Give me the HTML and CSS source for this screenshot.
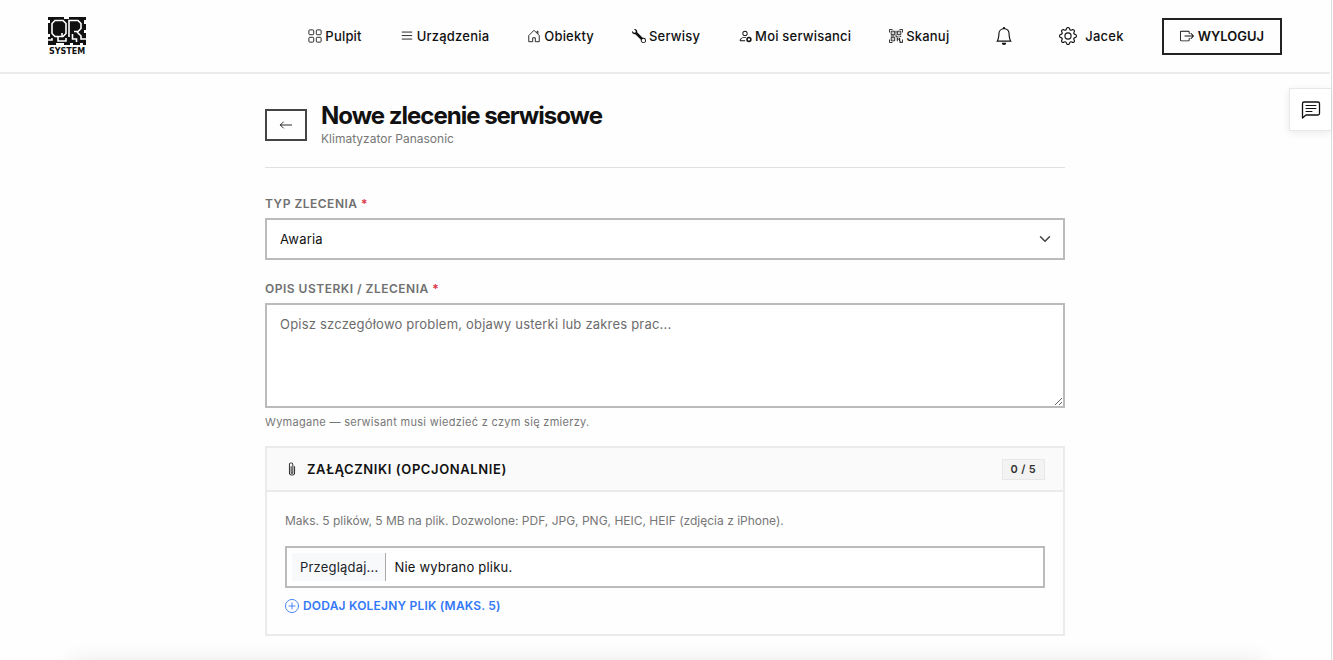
FILE: index.html
```html
<!DOCTYPE html>
<html lang="pl">
<head>
    <meta charset="UTF-8">
    <meta name="viewport" content="width=device-width, initial-scale=1.0">
    <title>Nowe zlecenie serwisowe</title>
    <link rel="stylesheet" href="styles.css">
</head>
<body>
    <div class="page">
        <header class="header">
            <a class="logo" href="#" aria-label="QR System">
                <svg class="logo-mark" viewBox="0 0 38 28" aria-hidden="true">
                    <rect width="38" height="28" fill="#111"/>
                    <g fill="none" stroke="#fff" stroke-width="1.600">
                        <path d="M7 3.500h8l3 3v10l-3 3H7l-3-3v-10z"/>
                        <path d="M21 20V3.500h9l3 3v5l-3 3h-4M29 15l4 4v3h5"/>
                        <path d="M24.500 17v5h4v3"/>
                        <path d="M0 23h4v-2M10 20v4h8v-3M14 16v4"/>
                    </g>
                    <path fill="#fff" d="M0 3h2v3H0zM16 0h5v2h-5zM36 3h2v4h-2zM0 17h2v3H0zM8 26h8v2H8zM22 26h3v2h-3zM32 26h3v2h-3zM36 13h2v3h-2z"/>
                </svg>
                <span class="logo-text">SYSTEM</span>
            </a>

            <nav class="nav">
                <a class="nav-link" href="#">
                    <svg class="icon" viewBox="0 0 16 16" fill="none" stroke="currentColor"><rect x="1" y="1" width="5.500" height="5.500" rx="1"/><rect x="9.500" y="1" width="5.500" height="5.500" rx="1"/><rect x="1" y="9.500" width="5.500" height="5.500" rx="1"/><rect x="9.500" y="9.500" width="5.500" height="5.500" rx="1"/></svg>
                    Pulpit
                </a>
                <a class="nav-link" href="#">
                    <svg class="icon" viewBox="0 0 16 16" fill="none" stroke="currentColor" stroke-linecap="round"><path d="M2.500 3.500h11M2.500 7.500h11M2.500 11.500h11"/></svg>
                    Urządzenia
                </a>
                <a class="nav-link" href="#">
                    <svg class="icon" viewBox="0 0 16 16" fill="none" stroke="currentColor" stroke-linejoin="round"><path d="M2 14.500v-7l6-6 6 6v7H9.500V10h-3v4.500z"/><path d="M11.500 4.500v-2h1v3"/></svg>
                    Obiekty
                </a>
                <a class="nav-link" href="#">
                    <svg class="icon" viewBox="0 0 16 16" fill="currentColor"><path fill-rule="evenodd" d="M.102 2.223A3.004 3.004 0 0 0 3.780 5.897l6.341 6.252A3.003 3.003 0 0 0 13 16a3 3 0 1 0-.851-5.878L5.897 3.781A3.004 3.004 0 0 0 2.223.1l2.141 2.142L4 4l-1.757.364zM13 11a2 2 0 1 1 0 4 2 2 0 0 1 0-4z"/></svg>
                    Serwisy
                </a>
                <a class="nav-link" href="#">
                    <svg class="icon" viewBox="0 0 16 16" fill="currentColor"><path d="M11 5a3 3 0 1 1-6 0 3 3 0 0 1 6 0M8 7a2 2 0 1 0 0-4 2 2 0 0 0 0 4m.256 7a4.500 4.500 0 0 1-.229-1.004H3c.001-.246.154-.986.832-1.664C4.484 10.680 5.711 10 8 10q.39 0 .74.025c.226-.341.496-.65.804-.918Q8.844 9.002 8 9c-5 0-6 3-6 4s1 1 1 1z"/><circle cx="12.500" cy="12" r="2.200" fill="none" stroke="currentColor" stroke-width="1.800"/></svg>
                    Moi serwisanci
                </a>
                <a class="nav-link" href="#">
                    <svg class="icon" viewBox="0 0 16 16" fill="none" stroke="currentColor"><path d="M.5 4V.5H4M12 .5h3.500V4M15.500 12v3.500H12M4 15.500H.5V12"/><path d="M2.500 2.500h4v4h-4zM9.500 2.500h4v4h-4zM2.500 9.500h4v4h-4zM8 2v3M8 6v3h3M2 8h4M12 8.500h2M9.500 10v4M9 11.500h4M12 10v4h2"/><path d="M4 4.500h1M11 4.500h1M4 11.500h1"/></svg>
                    Skanuj
                </a>
                <button class="bell" type="button" aria-label="Powiadomienia">
                    <svg class="icon-lg" viewBox="0 0 16 16" fill="currentColor"><path d="M8 16a2 2 0 0 0 2-2H6a2 2 0 0 0 2 2M8 1.918l-.797.161A4 4 0 0 0 4 6c0 .628-.134 2.197-.459 3.742-.16.767-.376 1.566-.663 2.258h10.244c-.287-.692-.502-1.490-.663-2.258C12.134 8.197 12 6.628 12 6a4 4 0 0 0-3.203-3.920zM14.220 12c.223.447.481.801.780 1H1c.299-.199.557-.553.780-1C2.680 10.200 3 6.880 3 6c0-2.420 1.720-4.440 4.005-4.901a1 1 0 1 1 1.990 0A5 5 0 0 1 13 6c0 .880.320 4.200 1.220 6"/></svg>
                </button>
                <a class="nav-link user" href="#">
                    <svg class="icon-lg" viewBox="0 0 16 16" fill="currentColor"><path d="M8 4.754a3.246 3.246 0 1 0 0 6.492 3.246 3.246 0 0 0 0-6.492M5.754 8a2.246 2.246 0 1 1 4.492 0 2.246 2.246 0 0 1-4.492 0"/><path d="M9.796 1.343c-.527-1.790-3.065-1.790-3.592 0l-.094.319a.873.873 0 0 1-1.255.520l-.292-.160c-1.640-.892-3.433.902-2.540 2.541l.159.292a.873.873 0 0 1-.520 1.255l-.319.094c-1.790.527-1.790 3.065 0 3.592l.319.094a.873.873 0 0 1 .520 1.255l-.160.292c-.892 1.640.901 3.434 2.541 2.540l.292-.159a.873.873 0 0 1 1.255.520l.094.319c.527 1.790 3.065 1.790 3.592 0l.094-.319a.873.873 0 0 1 1.255-.520l.292.160c1.640.893 3.434-.902 2.540-2.541l-.159-.292a.873.873 0 0 1 .520-1.255l.319-.094c1.790-.527 1.790-3.065 0-3.592l-.319-.094a.873.873 0 0 1-.520-1.255l.160-.292c.893-1.640-.902-3.433-2.541-2.540l-.292.159a.873.873 0 0 1-1.255-.520zm-2.633.283c.246-.835 1.428-.835 1.674 0l.094.319a1.873 1.873 0 0 0 2.693 1.115l.291-.160c.764-.415 1.600.420 1.184 1.185l-.159.292a1.873 1.873 0 0 0 1.116 2.692l.318.094c.835.246.835 1.428 0 1.674l-.319.094a1.873 1.873 0 0 0-1.115 2.693l.160.291c.415.764-.420 1.600-1.185 1.184l-.291-.159a1.873 1.873 0 0 0-2.693 1.116l-.094.318c-.246.835-1.428.835-1.674 0l-.094-.319a1.873 1.873 0 0 0-2.692-1.115l-.292.160c-.764.415-1.600-.420-1.184-1.185l.159-.291A1.873 1.873 0 0 0 1.945 8.930l-.319-.094c-.835-.246-.835-1.428 0-1.674l.319-.094A1.873 1.873 0 0 0 3.060 4.377l-.160-.292c-.415-.764.420-1.600 1.185-1.184l.292.159a1.873 1.873 0 0 0 2.692-1.115z"/></svg>
                    Jacek
                </a>
                <button class="logout" type="button">
                    <svg class="icon" viewBox="0 0 16 16" fill="currentColor"><path d="M10 12.500a.5.5 0 0 1-.5.5h-8a.5.5 0 0 1-.5-.5v-9a.5.5 0 0 1 .5-.5h8a.5.5 0 0 1 .5.5v2a.5.5 0 0 0 1 0v-2A1.500 1.500 0 0 0 9.500 2h-8A1.500 1.500 0 0 0 0 3.500v9A1.500 1.500 0 0 0 1.500 14h8a1.500 1.500 0 0 0 1.500-1.500v-2a.5.5 0 0 0-1 0z"/><path d="M15.854 8.354a.5.5 0 0 0 0-.708l-3-3a.5.5 0 0 0-.708.708L14.293 7.500H5.500a.5.5 0 0 0 0 1h8.793l-2.147 2.146a.5.5 0 0 0 .708.708z"/></svg>
                    WYLOGUJ
                </button>
            </nav>
        </header>

        <main class="container">
            <div class="page-head">
                <a class="back" href="#" aria-label="Wstecz">
                    <svg class="icon" viewBox="0 0 16 16" fill="none" stroke="currentColor" stroke-linecap="round" stroke-linejoin="round"><path d="M14.500 8h-13M5 4.500L1.500 8 5 11.500"/></svg>
                </a>
                <div>
                    <h1>Nowe zlecenie serwisowe</h1>
                    <p class="subtitle">Klimatyzator Panasonic</p>
                </div>
            </div>

            <form>
                <label class="label" for="type">Typ zlecenia <span class="required">*</span></label>
                <div class="select-wrap">
                    <select class="control" id="type">
                        <option>Awaria</option>
                    </select>
                    <svg class="chevron" viewBox="0 0 16 16" fill="none" stroke="currentColor" stroke-width="2" stroke-linecap="round" stroke-linejoin="round"><path d="M2 5l6 6 6-6"/></svg>
                </div>

                <label class="label" for="description">Opis usterki / zlecenia <span class="required">*</span></label>
                <textarea class="control" id="description" placeholder="Opisz szczegółowo problem, objawy usterki lub zakres prac..."></textarea>
                <p class="hint">Wymagane — serwisant musi wiedzieć z czym się zmierzy.</p>

                <section class="card">
                    <div class="card-head">
                        <svg class="icon" viewBox="0 0 16 16" fill="currentColor"><path d="M4.500 3a2.500 2.500 0 0 1 5 0v9a1.500 1.500 0 0 1-3 0V5a.5.5 0 0 1 1 0v7a.5.5 0 0 0 1 0V3a1.500 1.500 0 1 0-3 0v9a2.500 2.500 0 0 0 5 0V5a.5.5 0 0 1 1 0v7a3.500 3.500 0 1 1-7 0z"/></svg>
                        <h2>Załączniki (opcjonalnie)</h2>
                        <span class="counter">0 / 5</span>
                    </div>
                    <div class="card-body">
                        <p class="file-info">Maks. 5 plików, 5 MB na plik. Dozwolone: PDF, JPG, PNG, HEIC, HEIF (zdjęcia z iPhone).</p>
                        <input class="file-input" type="file" id="attachment">
                        <label class="file-box" for="attachment">
                            <span class="file-button">Przeglądaj...</span>
                            <span class="file-name">Nie wybrano pliku.</span>
                        </label>
                        <button class="add-file" type="button">
                            <svg class="icon" viewBox="0 0 16 16" fill="none" stroke="currentColor" stroke-linecap="round"><circle cx="8" cy="8" r="7.500"/><path d="M8 4.500v7M4.500 8h7"/></svg>
                            Dodaj kolejny plik (maks. 5)
                        </button>
                    </div>
                </section>
            </form>
        </main>

        <button class="chat" type="button" aria-label="Zgłoś uwagę">
            <svg class="icon-chat" viewBox="0 0 20 20" fill="none" stroke="currentColor" stroke-linecap="round" stroke-linejoin="round"><path stroke-width="1.300" d="M1.500 18V3.500a1.500 1.500 0 0 1 1.500-1.500h14a1.500 1.500 0 0 1 1.500 1.500v10a1.500 1.500 0 0 1-1.500 1.500H5z"/><path d="M5 5.500h10M5 8.500h10M5 11.500h6"/></svg>
        </button>
    </div>
    <div class="bottom-bar"></div>
</body>
</html>
```

FILE: styles.css
```css
/* General Reset */
* {
    margin: 0;
    padding: 0;
    box-sizing: border-box;
}

body {
    font-family: Inter, "Liberation Sans", sans-serif;
    font-size: 13px;
    color: #111;
    background-color: #fefefe;
    height: 100vh;
    overflow: hidden;
}

a {
    color: inherit;
    text-decoration: none;
}

button {
    font-family: inherit;
    color: inherit;
    background: none;
    border: none;
    cursor: pointer;
}

.page {
    position: relative;
    min-height: 100vh;
    margin-right: 1px;
    padding-right: 1px;
    border-right: 1px solid #dedede;
}

/* Icons */
.icon {
    width: 14px;
    height: 14px;
    flex: none;
}

.icon-lg {
    width: 18px;
    height: 18px;
    flex: none;
}

.icon-chat {
    width: 20px;
    height: 20px;
}

/* Header */
.header {
    display: flex;
    justify-content: space-between;
    align-items: center;
    height: 74px;
    padding: 0 48px;
    border-bottom: 2px solid #ebebeb;
}

.logo {
    display: flex;
    flex-direction: column;
    align-items: center;
    gap: 3px;
}

.logo-mark {
    width: 38px;
    height: 28px;
}

.logo-text {
    font-family: "DejaVu Sans", sans-serif;
    font-size: 8px;
    font-weight: 700;
    line-height: 8px;
}

.nav {
    display: flex;
    align-items: center;
    gap: 38px;
}

.nav-link {
    display: flex;
    align-items: center;
    gap: 3px;
    font-weight: 500;
    letter-spacing: 0.2px;
}

.bell {
    display: flex;
    padding: 8px;
}

.user {
    gap: 8px;
}

.logout {
    display: flex;
    align-items: center;
    gap: 4px;
    height: 37px;
    padding: 0 16px;
    border: 2px solid #222;
    font-size: 13px;
    font-weight: 600;
}

/* Page title */
.container {
    width: 100%;
    max-width: 800px;
    margin: 0 auto;
    padding-top: 28px;
}

.page-head {
    display: flex;
    align-items: center;
    gap: 14px;
    padding-bottom: 19px;
    margin-bottom: 28px;
    border-bottom: 1px solid #e0e0e0;
}

.back {
    display: flex;
    align-items: center;
    justify-content: center;
    width: 42px;
    height: 32px;
    border: 2px solid #444;
}

h1 {
    font-size: 24px;
    font-weight: 700;
    line-height: 28px;
    letter-spacing: -1px;
}

.subtitle {
    font-size: 12px;
    line-height: 18px;
    color: #777;
}

/* Form */
.label {
    display: block;
    margin-bottom: 7px;
    font-size: 12px;
    font-weight: 600;
    line-height: 15px;
    letter-spacing: 0.5px;
    text-transform: uppercase;
    color: #707070;
}

.required {
    color: #dc3545;
}

.control {
    display: block;
    width: 100%;
    padding: 0 13px;
    border: 2px solid #bbb;
    border-radius: 0;
    background-color: #fff;
    font-family: inherit;
    font-size: 13px;
    letter-spacing: 0.2px;
    color: #111;
    outline: none;
}

.select-wrap {
    position: relative;
    margin-bottom: 21px;
}

select.control {
    height: 42px;
    appearance: none;
}

.chevron {
    position: absolute;
    top: 15px;
    right: 14px;
    width: 12px;
    height: 12px;
    color: #444;
    pointer-events: none;
}

textarea.control {
    height: 105px;
    padding-top: 9px;
    line-height: 20px;
    resize: vertical;
}

textarea.control::placeholder {
    color: #6c6c6c;
}

.hint {
    margin-top: 7px;
    margin-bottom: 17px;
    font-size: 11px;
    line-height: 14px;
    letter-spacing: 0.3px;
    color: #777;
}

/* Attachments */
.card {
    border: 2px solid #ebebeb;
}

.card-head {
    display: flex;
    align-items: center;
    gap: 8px;
    height: 44px;
    padding: 0 18px;
    border-bottom: 2px solid #ebebeb;
    background-color: #fafafa;
}

h2 {
    flex: 1;
    font-size: 13px;
    font-weight: 600;
    letter-spacing: 0.6px;
    text-transform: uppercase;
}

.counter {
    padding: 1px 8px;
    border: 1px solid #e8e8e8;
    background-color: #f3f3f3;
    font-size: 11px;
    font-weight: 600;
    line-height: 17px;
    letter-spacing: 0.3px;
    color: #333;
}

.card-body {
    position: relative;
    padding: 20px 18px;
}

.file-info {
    margin-bottom: 16px;
    font-size: 12px;
    line-height: 18px;
    color: #777;
}

.file-input {
    position: absolute;
    width: 1px;
    height: 1px;
    opacity: 0;
}

.file-box {
    display: flex;
    align-items: center;
    height: 42px;
    padding: 0 5px;
    border: 2px solid #bbb;
    background-color: #fff;
    letter-spacing: 0.2px;
    cursor: pointer;
}

.file-button {
    padding: 0 7px 0 8px;
    border-right: 1px solid #aaa;
    background-color: #f8f9fa;
    line-height: 28px;
    color: #212529;
}

.file-name {
    padding-left: 8px;
}

.add-file {
    display: flex;
    align-items: center;
    gap: 4px;
    margin-top: 10px;
    font-size: 12px;
    font-weight: 600;
    line-height: 16px;
    letter-spacing: 0.2px;
    text-transform: uppercase;
    color: #3478f6;
}

/* Feedback tab */
.chat {
    position: absolute;
    top: 88px;
    right: 0;
    display: flex;
    align-items: center;
    justify-content: center;
    width: 42px;
    height: 43px;
    border: 1px solid #e8e8e8;
    border-right: none;
    background-color: #fff;
    box-shadow: 0 2px 8px rgba(0, 0, 0, 0.08);
}

.bottom-bar {
    position: fixed;
    right: 72px;
    bottom: -60px;
    left: 72px;
    height: 56px;
    background-color: #fff;
    box-shadow: 0 0 24px rgba(0, 0, 0, 0.12);
}
```
